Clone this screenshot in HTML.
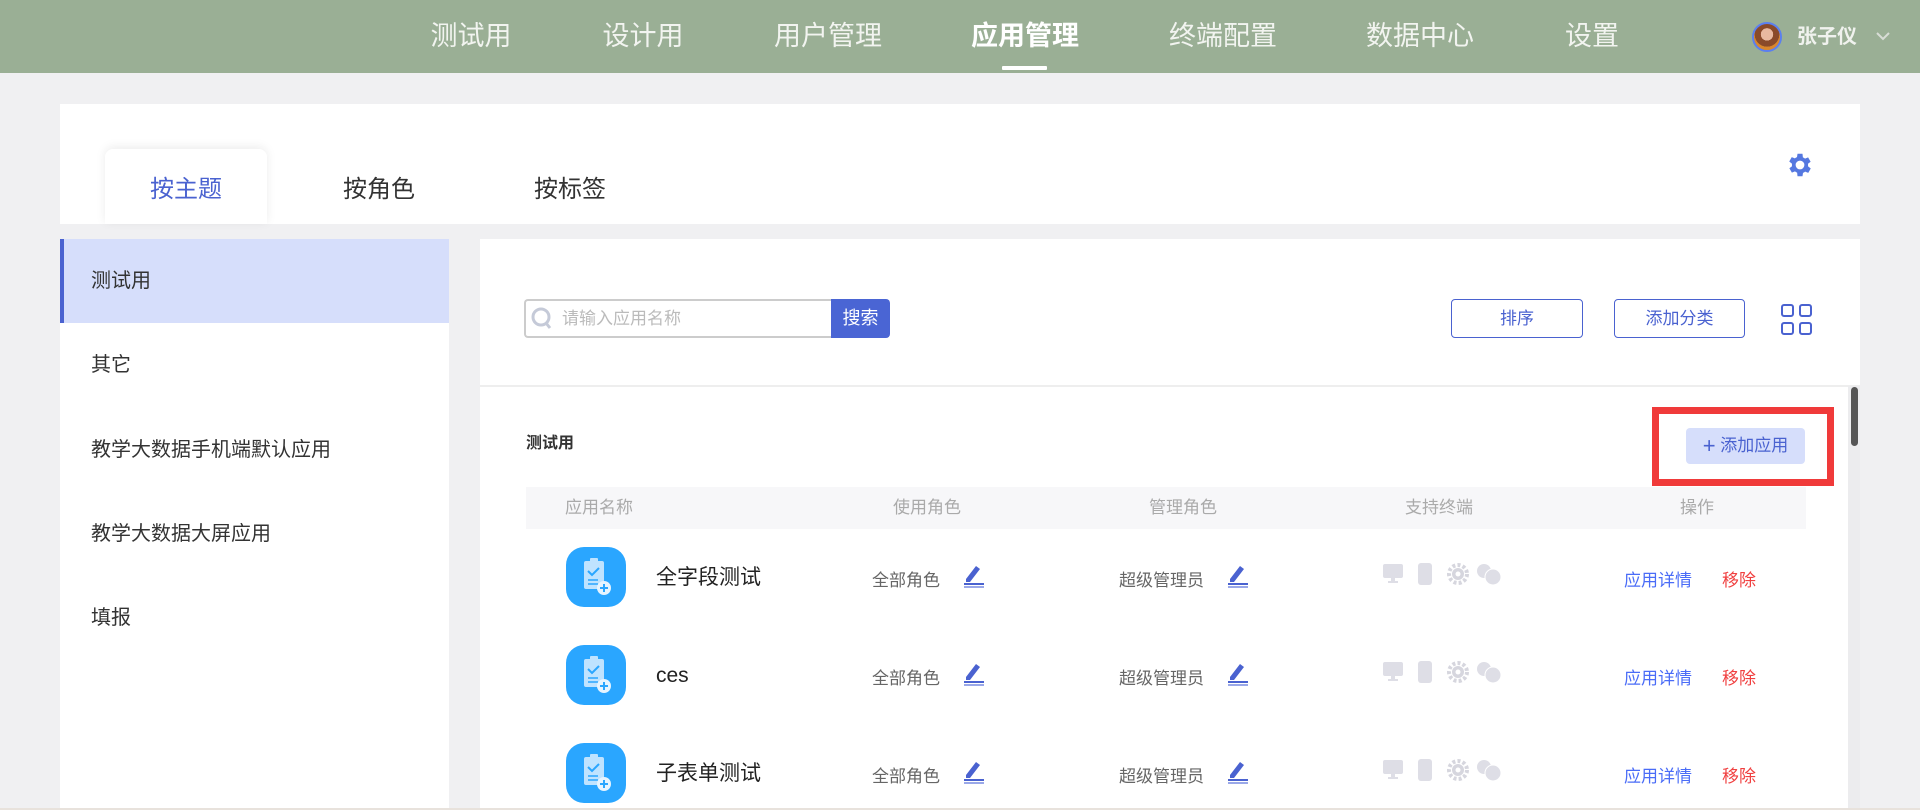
<!DOCTYPE html>
<html><head><meta charset="utf-8"><style>
*{margin:0;padding:0;box-sizing:border-box}
body{width:1920px;height:810px;overflow:hidden;background:#f0f0f2;font-family:"Liberation Sans","Noto Sans CJK SC",sans-serif;position:relative}
.a{position:absolute;white-space:nowrap}
.nav{left:0;top:0;width:1920px;height:73px;background:#9aaf95}
.ni{top:18px;font-size:27px;line-height:36px;color:#f2f4f0;transform:translateX(-50%)}
.side .it{position:absolute;left:0;width:389px;height:84px;font-size:20px;line-height:84px;padding-left:31px;color:#333}
.th{top:487px;font-size:17px;line-height:42px;color:#aaa}
.nm{font-size:21px;color:#222;line-height:30px}
.rl{font-size:17px;color:#666}
.lk{font-size:17px;color:#4a6cf7}
.rm{font-size:17px;color:#f04040}
.btn{border:1px solid #4a62d0;border-radius:4px;color:#4a62d0;font-size:17px;text-align:center;line-height:37px;height:39px}
</style></head><body>
<div class="a nav"></div>
<div class="a ni" style="left:471px">测试用</div>
<div class="a ni" style="left:643px">设计用</div>
<div class="a ni" style="left:828px">用户管理</div>
<div class="a ni" style="left:1025px;font-weight:bold;color:#fff">应用管理</div>
<div class="a ni" style="left:1223px">终端配置</div>
<div class="a ni" style="left:1420px">数据中心</div>
<div class="a ni" style="left:1592px">设置</div>
<div class="a" style="left:1002px;top:66px;width:45px;height:4px;background:#fff;border-radius:1px"></div>
<div class="a" style="left:1752px;top:22px;width:30px;height:30px;border-radius:50%;border:2px solid #5b7ff0;background:radial-gradient(circle at 50% 40%,#e8b9a0 0 30%,#8a4a2a 31% 60%,#d9862c 61%)"></div>
<div class="a" style="left:1797px;top:23px;font-size:20px;font-weight:bold;color:#f0f2ee;line-height:28px">张子仪</div>
<svg class="a" style="left:1876px;top:31px" width="14" height="10"><path d="M1 2l6 6 6-6" fill="none" stroke="#d8ddd6" stroke-width="2"/></svg>

<div class="a" style="left:60px;top:104px;width:1800px;height:120px;background:#fff"></div>
<div class="a" style="left:105px;top:149px;width:162px;height:75px;background:#fff;border-radius:8px 8px 0 0;box-shadow:0 -2px 10px rgba(0,0,0,.08)"></div>
<div class="a" style="left:150px;top:174px;font-size:24px;color:#4a62d0;line-height:32px">按主题</div>
<div class="a" style="left:343px;top:174px;font-size:24px;color:#333;line-height:32px">按角色</div>
<div class="a" style="left:534px;top:174px;font-size:24px;color:#333;line-height:32px">按标签</div>
<svg class="a" style="left:1785px;top:150px" width="30" height="30" viewBox="0 0 24 24"><path fill="#5578e0" d="M19.4 13a7.5 7.5 0 0 0 0-2l2.1-1.6-2-3.5-2.5 1a7 7 0 0 0-1.7-1L15 3h-4l-.4 2.7a7 7 0 0 0-1.7 1l-2.5-1-2 3.5L6.6 11a7.5 7.5 0 0 0 0 2l-2.1 1.6 2 3.5 2.5-1a7 7 0 0 0 1.7 1L11 21h4l.4-2.7a7 7 0 0 0 1.7-1l2.5 1 2-3.5zM13 15.5a3.5 3.5 0 1 1 0-7 3.5 3.5 0 0 1 0 7z" transform="translate(-1 0)"/></svg>

<div class="a side" style="left:60px;top:239px;width:389px;height:571px;background:#fff">
<div class="it" style="top:0;background:#d6defb;border-left:4px solid #4a62d0;padding-left:27px">测试用</div>
<div class="it" style="top:84px">其它</div>
<div class="it" style="top:169px">教学大数据手机端默认应用</div>
<div class="it" style="top:253px">教学大数据大屏应用</div>
<div class="it" style="top:337px">填报</div>
</div>

<div class="a" style="left:480px;top:239px;width:1380px;height:571px;background:#fff"></div>
<div class="a" style="left:480px;top:385px;width:1380px;height:2px;background:#eee"></div>
<div class="a" style="left:1848px;top:386px;width:12px;height:424px;background:#ececee"></div>
<div class="a" style="left:1851px;top:387px;width:7px;height:59px;background:#555;border-radius:4px"></div>

<div class="a" style="left:524px;top:299px;width:308px;height:39px;border:2px solid #ccc;border-right:none;border-radius:4px 0 0 4px"></div>
<svg class="a" style="left:530px;top:306px" width="24" height="26"><circle cx="11" cy="11" r="8" fill="none" stroke="#c5cad8" stroke-width="3"/><path d="M16 17l4 5" stroke="#c5cad8" stroke-width="3"/></svg>
<div class="a" style="left:562px;top:299px;line-height:39px;font-size:17px;color:#bbb">请输入应用名称</div>
<div class="a" style="left:831px;top:299px;width:59px;height:39px;background:#4a65d4;border-radius:0 4px 4px 0;color:#fff;font-size:18px;line-height:39px;text-align:center">搜索</div>
<div class="a btn" style="left:1451px;top:299px;width:132px">排序</div>
<div class="a btn" style="left:1614px;top:299px;width:131px">添加分类</div>
<svg class="a" style="left:1781px;top:304px" width="31" height="31"><g fill="none" stroke="#4a62d0" stroke-width="2"><rect x="1" y="1" width="11" height="11" rx="2"/><rect x="19" y="1" width="11" height="11" rx="2"/><rect x="1" y="19" width="11" height="11" rx="2"/><rect x="19" y="19" width="11" height="11" rx="2"/></g></svg>

<div class="a" style="left:526px;top:432px;font-size:16px;font-weight:bold;color:#333;line-height:24px">测试用</div>
<div class="a" style="left:1652px;top:407px;width:182px;height:79px;border:7px solid #f03a3a"></div>
<div class="a" style="left:1686px;top:428px;width:119px;height:36px;background:#d6defb;border-radius:4px;color:#4a62d0;font-size:17px;line-height:36px;text-align:center"><span style="font-size:22px;vertical-align:-2px">+</span> 添加应用</div>

<div class="a" style="left:526px;top:487px;width:1280px;height:42px;background:#f7f7f9"></div>
<div class="a th" style="left:565px">应用名称</div>
<div class="a th" style="left:893px">使用角色</div>
<div class="a th" style="left:1149px">管理角色</div>
<div class="a th" style="left:1405px">支持终端</div>
<div class="a th" style="left:1680px">操作</div>

<svg width="0" height="0" style="position:absolute"><defs>
<g id="ic"><rect width="60" height="60" rx="18" fill="#2aa6ff"/><rect x="18" y="14" width="20" height="28" rx="2" fill="#bfe3ff"/><rect x="24" y="11" width="8" height="5" rx="1" fill="#bfe3ff"/><path d="M22 24l4 4 7-7" fill="none" stroke="#2aa6ff" stroke-width="2"/><path d="M22 33h10M22 37h10" stroke="#2aa6ff" stroke-width="1.5"/><circle cx="38" cy="41" r="7" fill="#e6f4ff"/><path d="M38 37v8M34 41h8" stroke="#2aa6ff" stroke-width="2"/></g>
<g id="ed"><path d="M4 16L14 3l4 3L8 19H4z" fill="#4a62d0"/><rect x="2" y="20" width="20" height="2" fill="#4a62d0"/><rect x="2" y="23" width="20" height="2" fill="#9aa8e8"/></g>
<g id="tm" fill="#dedee6"><rect x="0" y="1" width="20" height="14" rx="2"/><rect x="8" y="15" width="4" height="4"/><rect x="5" y="18" width="10" height="2"/><rect x="35" y="0" width="14" height="22" rx="3"/><circle cx="75" cy="11" r="9" fill="none" stroke="#d6d6de" stroke-width="4" stroke-dasharray="3 2.2"/><circle cx="75" cy="11" r="6" fill="#d6d6de"/><circle cx="75" cy="11" r="2.5" fill="#fff"/><circle cx="101" cy="8" r="7"/><circle cx="110" cy="14" r="8" stroke="#fff" stroke-width="1"/></g>
</defs></svg>

<div class="rows">
<svg class="a" style="left:566px;top:547px" width="60" height="60"><use href="#ic"/></svg>
<div class="a nm" style="left:656px;top:563px">全字段测试</div>
<div class="a rl" style="left:872px;top:566px">全部角色</div>
<svg class="a" style="left:962px;top:563px" width="24" height="26"><use href="#ed"/></svg>
<div class="a rl" style="left:1119px;top:566px">超级管理员</div>
<svg class="a" style="left:1226px;top:563px" width="24" height="26"><use href="#ed"/></svg>
<svg class="a" style="left:1383px;top:563px" width="125" height="24"><use href="#tm"/></svg>
<div class="a lk" style="left:1624px;top:566px">应用详情</div>
<div class="a rm" style="left:1722px;top:566px">移除</div>

<svg class="a" style="left:566px;top:645px" width="60" height="60"><use href="#ic"/></svg>
<div class="a nm" style="left:656px;top:661px">ces</div>
<div class="a rl" style="left:872px;top:664px">全部角色</div>
<svg class="a" style="left:962px;top:661px" width="24" height="26"><use href="#ed"/></svg>
<div class="a rl" style="left:1119px;top:664px">超级管理员</div>
<svg class="a" style="left:1226px;top:661px" width="24" height="26"><use href="#ed"/></svg>
<svg class="a" style="left:1383px;top:661px" width="125" height="24"><use href="#tm"/></svg>
<div class="a lk" style="left:1624px;top:664px">应用详情</div>
<div class="a rm" style="left:1722px;top:664px">移除</div>

<svg class="a" style="left:566px;top:743px" width="60" height="60"><use href="#ic"/></svg>
<div class="a nm" style="left:656px;top:759px">子表单测试</div>
<div class="a rl" style="left:872px;top:762px">全部角色</div>
<svg class="a" style="left:962px;top:759px" width="24" height="26"><use href="#ed"/></svg>
<div class="a rl" style="left:1119px;top:762px">超级管理员</div>
<svg class="a" style="left:1226px;top:759px" width="24" height="26"><use href="#ed"/></svg>
<svg class="a" style="left:1383px;top:759px" width="125" height="24"><use href="#tm"/></svg>
<div class="a lk" style="left:1624px;top:762px">应用详情</div>
<div class="a rm" style="left:1722px;top:762px">移除</div>
</div>
<div class="a" style="left:0;top:808px;width:1920px;height:2px;background:#e8e2dc"></div>
</body></html>
